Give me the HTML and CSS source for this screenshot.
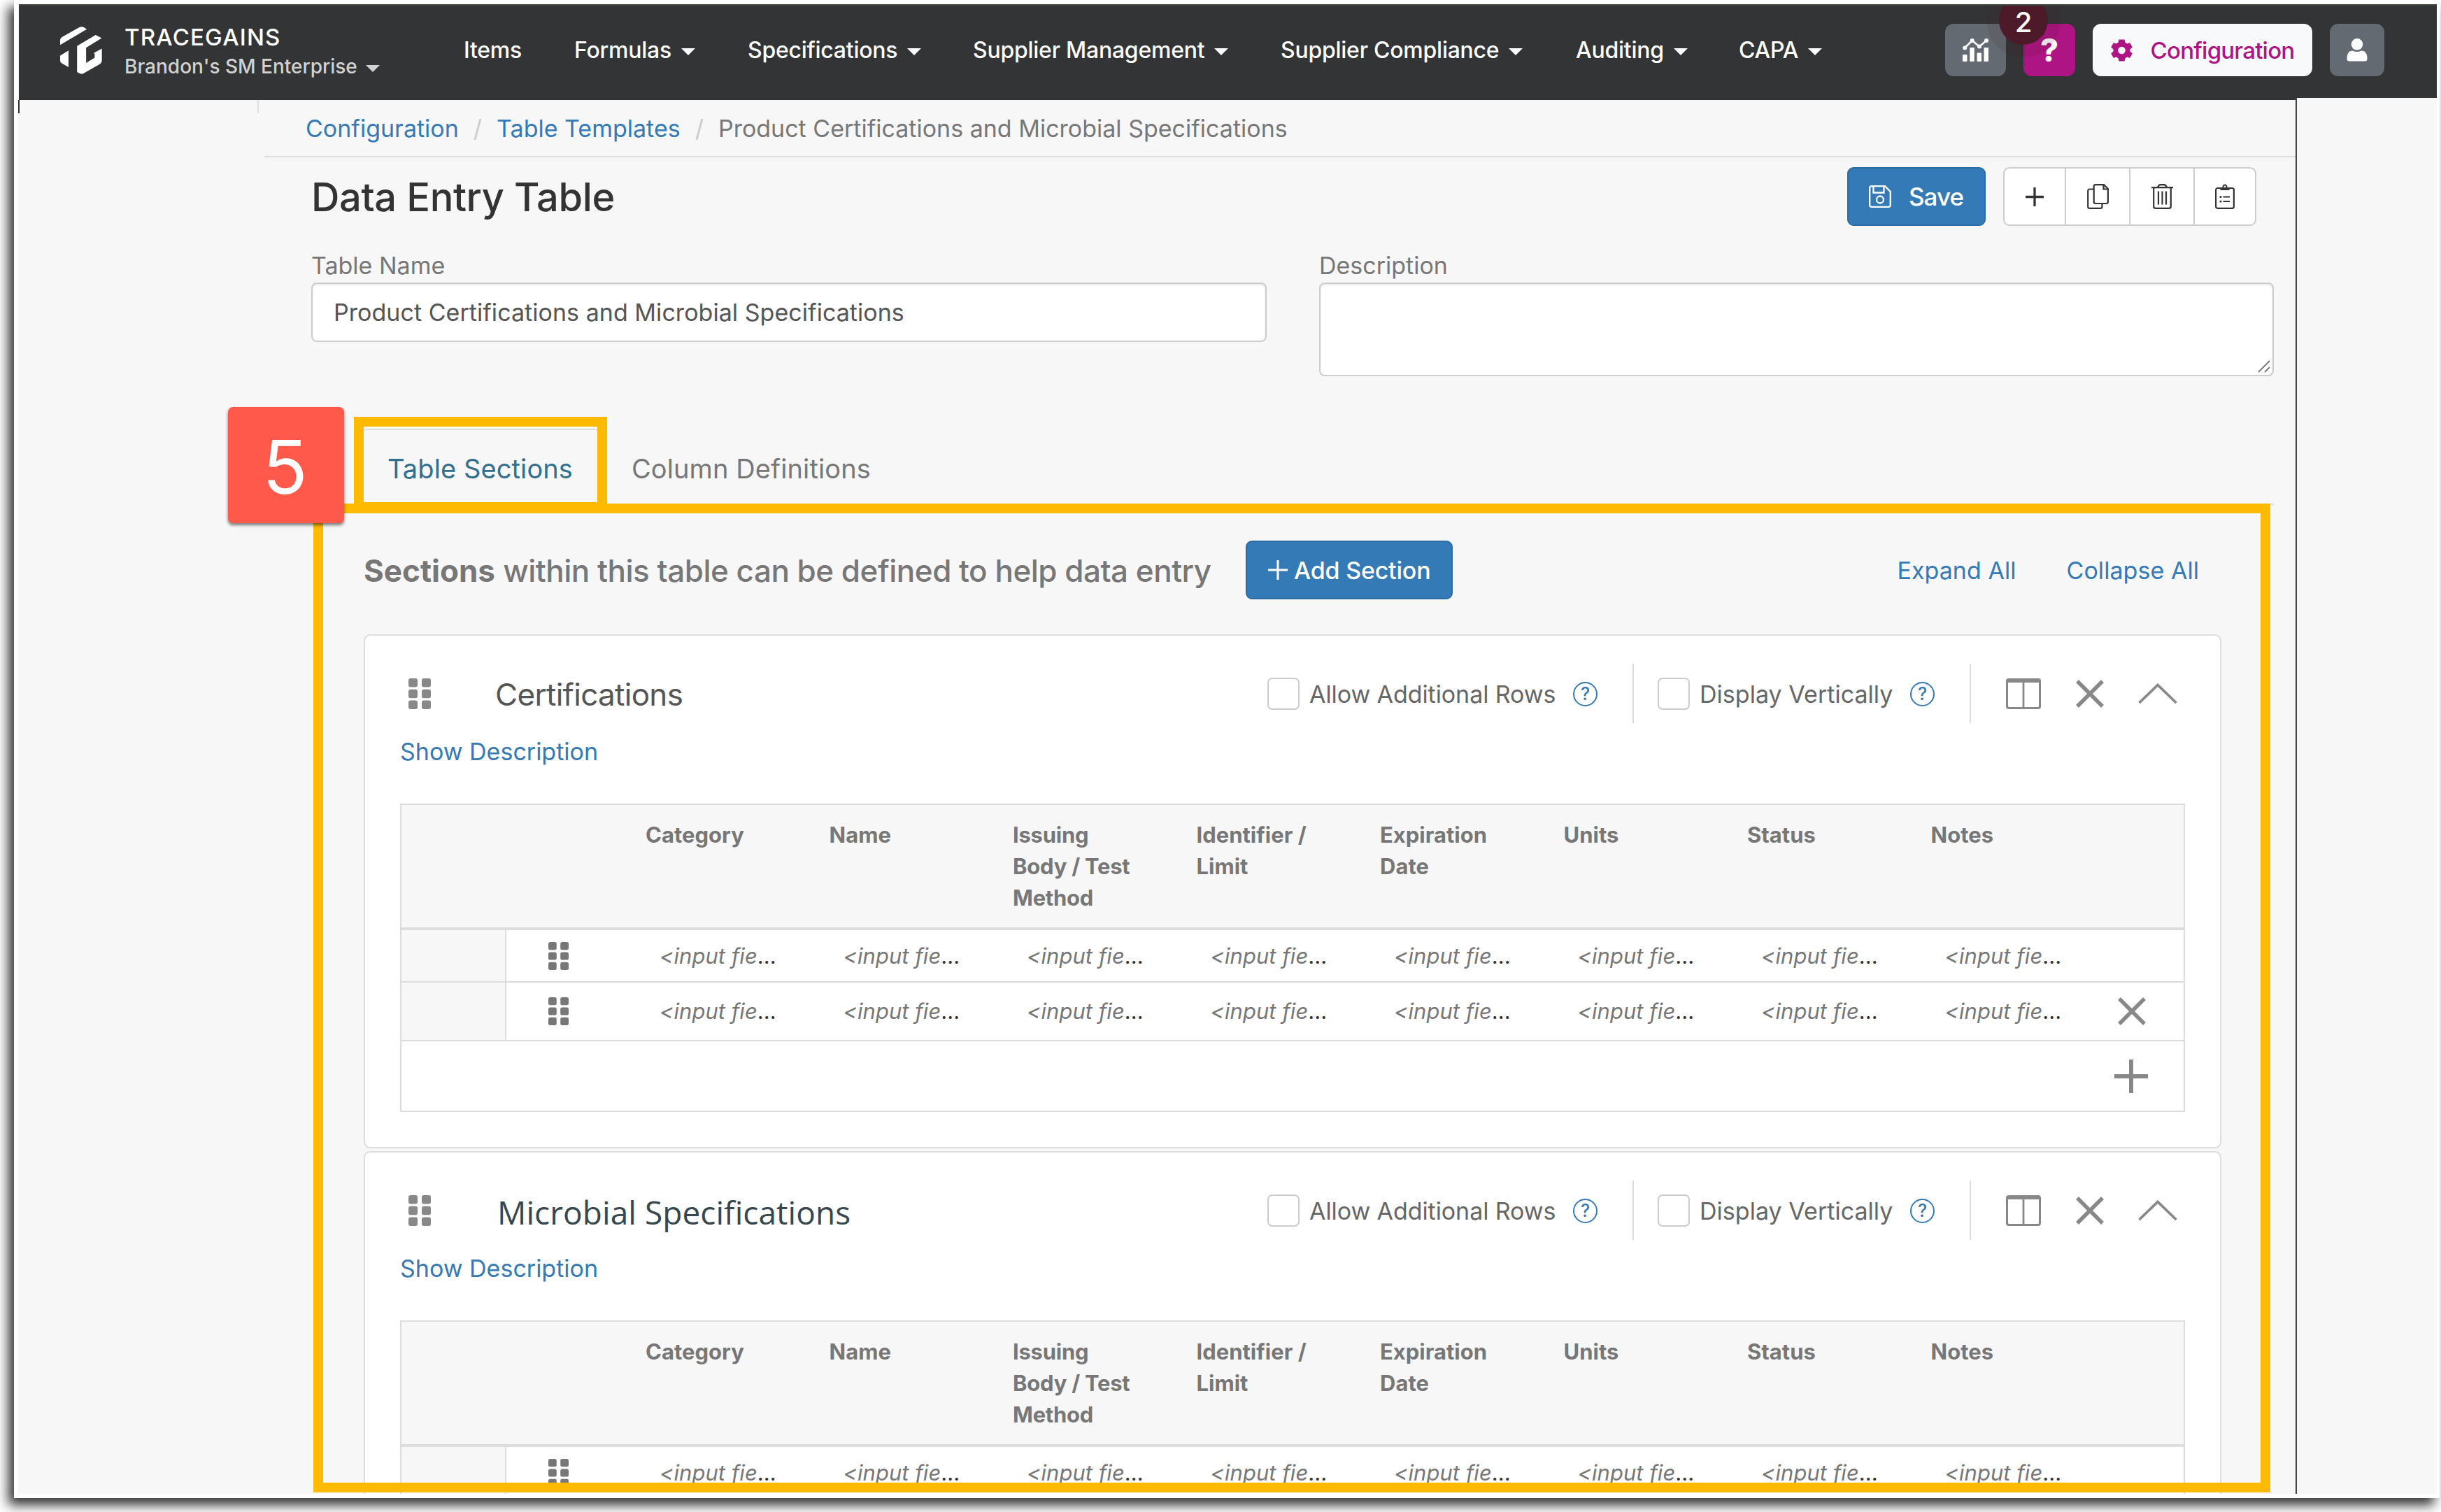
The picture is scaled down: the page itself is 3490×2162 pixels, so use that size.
FILE: index.html
```html
<!DOCTYPE html>
<html lang="en">
<head>
<meta charset="utf-8">
<title>Data Entry Table</title>
<link rel="stylesheet" href="styles.css">
</head>
<body>
<svg class="defs" width="0" height="0" aria-hidden="true">
  <symbol id="i-grip" viewBox="0 0 32 44"><g fill="currentColor"><rect width="13" height="12.4" rx="3"/><rect x="19" width="13" height="12.4" rx="3"/><rect y="15.8" width="13" height="12.4" rx="3"/><rect x="19" y="15.8" width="13" height="12.4" rx="3"/><rect y="31.6" width="13" height="12.4" rx="3"/><rect x="19" y="31.6" width="13" height="12.4" rx="3"/></g></symbol>
  <symbol id="i-columns" viewBox="0 0 50 44"><path fill="currentColor" fill-rule="evenodd" d="M4 0H46Q50 0 50 4V40Q50 44 46 44H4Q0 44 0 40V4Q0 0 4 0ZM3 6V39.5Q3 41 4.500 41H23.600V6ZM26.400 6V41H45.500Q47 41 47 39.500V6Z"/></symbol>
  <symbol id="i-close" viewBox="0 0 40 40"><path d="M2 2L38 38M38 2L2 38" fill="none" stroke="currentColor" stroke-width="5.500"/></symbol>
  <symbol id="i-up" viewBox="0 0 56 30"><path d="M1.500 28L28 2.500L54.500 28" fill="none" stroke="currentColor" stroke-width="3.800"/></symbol>
  <symbol id="i-plus" viewBox="0 0 48 48"><path d="M24 0V48M0 24H48" fill="none" stroke="currentColor" stroke-width="6"/></symbol>
</svg>
<div class="window">
<div class="app">
  <header class="topbar">
    <svg class="logo" viewBox="48 50 181 205"><g fill="#fff"><path d="M48 129V108Q48 100 56 95L131 53Q141 48 150 53L163 61Z"/><path d="M48 175L84 153V225L55 208Q48 204 48 196Z"/><path d="M121 134L201 86L227 100L160 141V207L197 184V168L193 164L228 145V196Q228 206 220 211L150 251Q141 257 132 252L121 246Z"/></g></svg>
    <div class="brand">
      <div class="brand-name">TRACEGAINS</div>
      <div class="brand-org">Brandon's SM Enterprise<i class="caret"></i></div>
    </div>
    <nav class="nav">
      <a>Items</a><a>Formulas<i class="caret"></i></a><a>Specifications<i class="caret"></i></a><a>Supplier Management<i class="caret"></i></a><a>Supplier Compliance<i class="caret"></i></a><a>Auditing<i class="caret"></i></a><a>CAPA<i class="caret"></i></a>
    </nav>
    <div class="tools">
      <button class="tool chart"><svg width="37" height="33" viewBox="0 0 37 33"><g fill="#fff"><rect y="23" width="6.500" height="10" rx="1"/><rect x="10.300" y="13" width="6.500" height="20" rx="1"/><rect x="20.600" y="20.500" width="6.500" height="12.500" rx="1"/><rect x="30.500" y="13" width="6.500" height="20" rx="1"/><circle cx="3.200" cy="13.500" r="3"/><circle cx="13.700" cy="3" r="3"/><circle cx="24" cy="11.500" r="3"/><circle cx="34" cy="3" r="3"/></g><path d="M3 13.500L13.700 3L24 11.500L34 3" fill="none" stroke="#fff" stroke-width="2.500"/></svg></button>
      <button class="tool help">?<span class="badge">2</span></button>
      <button class="tool config"><svg width="31" height="32" viewBox="0 0 31 32"><path fill="#ae1483" fill-rule="evenodd" d="M11.500 .5H19.500L20.500 4.800L23.500 6.500L27 5L30.800 11.500L27.500 14.500V17.500L30.800 20.500L27 27L23.500 25.500L20.500 27.200L19.500 31.500H11.500L10.500 27.200L7.500 25.500L4 27L.2 20.500L3.500 17.500V14.500L.2 11.500L4 5L7.500 6.500L10.500 4.800ZM15.500 10.700A5.300 5.300 0 1 0 15.500 21.300A5.300 5.300 0 1 0 15.500 10.700Z"/></svg>Configuration</button>
      <button class="tool user"><svg width="30" height="33" viewBox="0 0 30 33"><g fill="#fff"><circle cx="15" cy="8.300" r="8.300"/><path d="M.5 29Q.5 17.500 9 17.500Q15 20.500 21 17.500Q29.500 17.500 29.500 29Q29.500 32.500 26 32.500H4Q.5 32.500 .5 29Z"/></g></svg></button>
    </div>
  </header>

  <div class="body">
    <aside class="gutter-left"><div class="gutter-edge"></div></aside>
    <main class="content">
      <div class="crumbs"><a>Configuration</a><span class="sep">/</span><a>Table Templates</a><span class="sep">/</span><span>Product Certifications and Microbial Specifications</span></div>

      <div class="page">
        <div class="title-row">
          <h1>Data Entry Table</h1>
          <button class="btn save"><svg width="32" height="32" viewBox="0 0 32 32"><g fill="none" stroke="#fff" stroke-width="2.300"><path d="M4 1.200H23L30.800 9V28Q30.800 30.800 28 30.800H4Q1.200 30.800 1.200 28V4Q1.200 1.200 4 1.200Z"/><path d="M6.500 1.500V10.500H21.500V1.500"/><circle cx="16" cy="20.500" r="5"/></g></svg>Save</button>
          <div class="group">
            <button><svg width="26" height="27" viewBox="0 0 26 27"><path d="M13 0V27M0 13.500H26" stroke="#333" stroke-width="3.300"/></svg></button>
            <button><svg width="31" height="36" viewBox="0 0 31 36"><g fill="none" stroke="#333" stroke-width="2.200"><path d="M9 7.500H3.500Q1.200 7.500 1.200 10V32.500Q1.200 34.800 3.500 34.800H19Q21.500 34.800 21.500 32.500V28.500"/><path d="M12 1.200H24L29.900 7V25.500Q29.900 28 27.500 28H12Q9.700 28 9.700 25.500V3.500Q9.700 1.200 12 1.200Z"/><path d="M23.500 1.500V7.500H29.500"/></g></svg></button>
            <button><svg width="31" height="36" viewBox="0 0 31 36"><g fill="none" stroke="#333" stroke-width="2.200"><path d="M0 5.200H31M9 5Q10.500 1.200 13 1.200H18Q20.500 1.200 22 5"/><path d="M3.200 5.500V32Q3.200 34.800 6 34.800H25Q27.800 34.800 27.800 32V5.500"/><path d="M10 10.500V29.500M15.500 10.500V29.500M21 10.500V29.500"/></g></svg></button>
            <button><svg width="28" height="36" viewBox="0 0 28 36"><rect x="1.100" y="6" width="25.800" height="28.800" rx="2.500" fill="none" stroke="#333" stroke-width="2.200"/><path fill="#333" fill-rule="evenodd" d="M7 5H10.500Q10.500 .5 14 .5T17.500 5H21V7Q21 9 19 9H9Q7 9 7 7ZM14 2.500A1.500 1.500 0 1 0 14 5.500A1.500 1.500 0 1 0 14 2.500Z"/><path d="M11.500 18.500H21M11.500 25H21" stroke="#333" stroke-width="2.200"/><circle cx="8" cy="18.500" r="1.600" fill="#333"/><circle cx="8" cy="25" r="1.600" fill="#333"/></svg></button>
          </div>
        </div>

        <div class="form">
          <div class="field"><label>Table Name</label><div class="input">Product Certifications and Microbial Specifications</div></div>
          <div class="field"><label>Description</label><div class="input area"><svg width="18" height="18" viewBox="0 0 18 18"><path d="M1 17L17 1M10 17L17 10" stroke="#777" stroke-width="1.800"/></svg></div></div>
        </div>

        <div class="tabs"><a class="tab active">Table Sections</a><a class="tab">Column Definitions</a></div>

        <div class="panel">
          <div class="panel-head">
            <p><b>Sections</b> <span>within this table can be defined to help data entry</span></p>
            <button class="btn add"><svg width="28" height="28" viewBox="0 0 28 28"><path d="M14 0V28M0 14H28" stroke="#fff" stroke-width="3"/></svg>Add Section</button>
            <div class="links"><a>Expand All</a><a>Collapse All</a></div>
          </div>

          <section class="card">
            <div class="card-head">
              <svg class="grip"><use href="#i-grip"/></svg>
              <h2>Certifications</h2>
              <div class="option first"><i class="box"></i>Allow Additional Rows<span class="hint">?</span></div>
              <div class="option second"><i class="box"></i>Display Vertically<span class="hint">?</span></div>
              <div class="actions"><svg width="50" height="44"><use href="#i-columns"/></svg><svg width="40" height="40"><use href="#i-close"/></svg><svg width="56" height="30"><use href="#i-up"/></svg></div>
            </div>
            <a class="show">Show Description</a>
            <div class="table">
              <div class="row head"><i></i><i></i><b>Category</b><b>Name</b><b class="tight">Issuing<br>Body / Test<br>Method</b><b>Identifier /<br>Limit</b><b>Expiration<br>Date</b><b>Units</b><b>Status</b><b>Notes</b><i></i></div>
              <div class="row"><i class="stub"></i><i><svg class="grip small"><use href="#i-grip"/></svg></i><span><em>&lt;input fie</em>...</span><span><em>&lt;input fie</em>...</span><span><em>&lt;input fie</em>...</span><span><em>&lt;input fie</em>...</span><span><em>&lt;input fie</em>...</span><span><em>&lt;input fie</em>...</span><span><em>&lt;input fie</em>...</span><span><em>&lt;input fie</em>...</span><i></i></div>
              <div class="row tall"><i class="stub"></i><i><svg class="grip small"><use href="#i-grip"/></svg></i><span><em>&lt;input fie</em>...</span><span><em>&lt;input fie</em>...</span><span><em>&lt;input fie</em>...</span><span><em>&lt;input fie</em>...</span><span><em>&lt;input fie</em>...</span><span><em>&lt;input fie</em>...</span><span><em>&lt;input fie</em>...</span><span><em>&lt;input fie</em>...</span><i><svg width="40" height="40"><use href="#i-close"/></svg></i></div>
              <div class="row foot"><i><svg width="48" height="48"><use href="#i-plus"/></svg></i></div>
            </div>
          </section>

          <section class="card">
            <div class="card-head">
              <svg class="grip"><use href="#i-grip"/></svg>
              <h2 class="dark">Microbial Specifications</h2>
              <div class="option first"><i class="box"></i>Allow Additional Rows<span class="hint">?</span></div>
              <div class="option second"><i class="box"></i>Display Vertically<span class="hint">?</span></div>
              <div class="actions"><svg width="50" height="44"><use href="#i-columns"/></svg><svg width="40" height="40"><use href="#i-close"/></svg><svg width="56" height="30"><use href="#i-up"/></svg></div>
            </div>
            <a class="show">Show Description</a>
            <div class="table">
              <div class="row head"><i></i><i></i><b>Category</b><b>Name</b><b class="tight">Issuing<br>Body / Test<br>Method</b><b>Identifier /<br>Limit</b><b>Expiration<br>Date</b><b>Units</b><b>Status</b><b>Notes</b><i></i></div>
              <div class="row"><i class="stub"></i><i><svg class="grip small"><use href="#i-grip"/></svg></i><span><em>&lt;input fie</em>...</span><span><em>&lt;input fie</em>...</span><span><em>&lt;input fie</em>...</span><span><em>&lt;input fie</em>...</span><span><em>&lt;input fie</em>...</span><span><em>&lt;input fie</em>...</span><span><em>&lt;input fie</em>...</span><span><em>&lt;input fie</em>...</span><i></i></div>
            </div>
          </section>
        </div>
      </div>
    </main>
    <aside class="gutter-right"></aside>
  </div>

  <div class="mark mark-tab"></div>
  <div class="mark mark-panel"></div>
  <div class="step">5</div>
</div>
</div>
</body>
</html>
```
FILE: styles.css
```css
* { box-sizing: border-box; }
html, body { margin: 0; height: 2162px; overflow: hidden; background: #fff; }
body { padding: 0 2px 20px 20px; font-family: Inter, "Liberation Sans", sans-serif; font-size: 34px; color: #777; }
svg { display: block; flex: none; overflow: visible; }
button { font: inherit; margin: 0; padding: 0; border: 0; display: flex; align-items: center; }
h1, h2, p { margin: 0; }
i { font-style: normal; }
.defs { position: absolute; }

.window { height: 2142px; padding: 6px 4px 6px 6px; background: #fff; box-shadow: -8px 10px 16px #333; }
.app { position: relative; height: 2130px; overflow: hidden; background: #f7f7f7; display: flex; flex-direction: column; }

/* top bar */
.topbar { flex: none; height: 137px; margin-left: 1px; padding: 0 75px 8px 59px; background: #333436; border-top: 2px solid #414640; display: flex; align-items: center; overflow: hidden; }
.logo { width: 60px; height: 68px; }
.brand { margin: 5px 0 0 32px; width: 485px; font-weight: 500; line-height: 42px; white-space: nowrap; }
.brand-name { font-size: 33px; letter-spacing: 1.18px; color: #fff; }
.brand-org { font-size: 28px; color: #d2d2d2; display: flex; align-items: center; }
.caret { margin: 6px 0 0 14px; border: 10px solid transparent; border-top-color: currentColor; border-bottom: 0; }
.brand-org .caret { margin-left: 12px; }
.nav { display: grid; grid-template-columns: 158px 248px 322px 440px 422px 233px 140px; font-size: 32px; font-weight: 500; letter-spacing: -.25px; color: #fff; white-space: nowrap; }
.nav a { display: flex; align-items: center; }
.nav .caret { margin-top: 5px; }
.tools { margin-left: auto; display: flex; gap: 25px; }
.tool { position: relative; height: 75px; border-radius: 12px; justify-content: center; color: #fff; }
.chart { width: 87px; background: #646a72; }
.help { width: 74px; background: #ae1483; font-size: 45px; font-weight: 800; }
.config { width: 314px; background: #f8f9fb; color: #ae1483; gap: 26px; font-size: 33px; font-weight: 500; letter-spacing: -.78px; }
.user { width: 78px; background: #646a72; }
.badge { position: absolute; left: -35px; top: -40px; width: 70px; height: 70px; border-radius: 50%; background: #4d1a2a; box-shadow: 0 0 0 18px rgba(77, 26, 42, .12); font-size: 40px; font-weight: 500; line-height: 75px; text-align: center; }

/* page frame */
.body { flex: 1; display: flex; min-height: 0; }
.gutter-left { width: 344px; }
.gutter-edge { height: 19px; border-left: 2px solid #333; border-right: 2px solid #ddd; }
.content { width: 2912px; }
.gutter-right { position: relative; width: 202px; margin-top: -3px; background: #f7f7f7; border-left: 2px solid #444; }

.crumbs { height: 82px; margin-left: 8px; padding: 0 0 0 59px; border-bottom: 2px solid #ddd; display: flex; align-items: center; gap: 21px; }
.crumbs a, .links a, .show { color: #337ab7; }
.sep { color: #ccc; }
.page { padding: 14px 31px 0 75px; }

.title-row { height: 84px; display: flex; align-items: center; padding-right: 25px; }
h1 { font-size: 56px; font-weight: 500; letter-spacing: -.4px; color: #333; margin: 1px auto 0 0; }
.btn { height: 84px; border: 2px solid #2e6da4; border-radius: 9px; background: #337ab7; color: #fff; font-weight: 500; }
.save { width: 198px; padding-left: 29px; gap: 25px; font-size: 35px; letter-spacing: -1px; }
.group { margin-left: 25px; width: 362px; height: 84px; display: grid; grid-template-columns: 86px 92px 92px 88px; background: #fff; border: 2px solid #ccc; border-radius: 9px; }
.group button { justify-content: center; background: none; }
.group button + button { border-left: 2px solid #ccc; }

.form { margin-top: 33px; height: 181px; display: grid; grid-template-columns: 1366px 1365px; gap: 75px; }
.field label { display: block; height: 48px; line-height: 48px; }
.input { height: 85px; border: 2px solid #ccc; border-radius: 8px; background: #fff; box-shadow: inset 0 2px 3px rgba(0, 0, 0, .08); padding-left: 30px; line-height: 82px; letter-spacing: .04px; color: #555; }
.area { height: 134px; display: flex; align-items: flex-end; justify-content: flex-end; padding: 0 3px 3px; }

.tabs { margin-top: 76px; height: 109px; border-bottom: 2px solid #ddd; padding-left: 69px; display: flex; font-size: 38px; }
.tab { padding: 0 38px; line-height: 114px; letter-spacing: .1px; }
.tab + .tab { padding-left: 44px; }
.active { color: #31708f; border: 2px solid #ddd; border-bottom: 0; border-radius: 8px 8px 0 0; line-height: 110px; }

/* sections panel */
.panel { padding: 51px 75px 0; }
.panel-head { height: 84px; margin-bottom: 50px; display: flex; align-items: center; }
.panel-head p { width: 1261px; font-size: 44px; font-weight: 500; letter-spacing: -.5px; white-space: nowrap; padding-top: 1px; }
.panel-head b { font-weight: 700; letter-spacing: 0; }
.add { width: 296px; padding-left: 30px; gap: 9px; letter-spacing: -.2px; }
.links { margin: 0 32px 0 auto; display: flex; gap: 72px; letter-spacing: .05px; }

.card { height: 735px; margin-bottom: 4px; padding: 40px 50px 0; background: #fff; border: 2px solid #ddd; border-radius: 9px; }
.card-head { height: 85px; padding: 0 11px 0 12px; display: flex; align-items: center; }
.grip { width: 32px; height: 44px; color: #888; }
.small { width: 29px; height: 40px; color: #777; }
h2 { margin: 2px auto 0 92px; font-size: 44px; font-weight: 400; letter-spacing: -.7px; color: #555; }
.dark { margin-left: 95px; padding-top: 2px; font-family: "Open Sans", "Noto Sans", sans-serif; font-size: 46px; letter-spacing: .06px; color: #37474f; }
.option { height: 85px; display: flex; align-items: center; color: #666; letter-spacing: -.08px; white-space: nowrap; padding-top: 1px; }
.first { width: 522px; }
.second { width: 482px; padding-left: 34px; letter-spacing: .03px; }
.second, .actions { border-left: 2px solid #ddd; }
.box { width: 46px; height: 46px; margin: -1px 14px 0 0; border: 2px solid #ccc; border-radius: 7px; background: #fff; }
.hint { width: 35px; height: 35px; margin: 0 50px 0 auto; border: 2.5px solid #337ab7; border-radius: 50%; color: #337ab7; font-size: 25px; font-weight: 500; line-height: 30px; text-align: center; letter-spacing: 0; }
.actions { height: 85px; padding-left: 50px; display: flex; align-items: center; gap: 49.5px; color: #888; }
.show { display: block; height: 50px; margin-top: 16px; line-height: 50px; }

.table { margin-top: 49px; border: 2px solid #ddd; }
.row { height: 75px; display: grid; grid-template-columns: 150px 149px repeat(8, 262.5px) 149px; border-bottom: 2px solid #ddd; font-size: 31px; line-height: 73px; white-space: nowrap; }
.row > i { display: flex; align-items: center; justify-content: center; color: #888; }
.head { height: 179px; border-bottom-width: 4px; background: #f7f7f7; }
.head b { padding: 20px 0 0 50px; line-height: 45px; }
.head .tight { letter-spacing: -.25px; }
.row span { padding-left: 70px; color: #333; letter-spacing: .02px; }
.row em { color: #777; }
.row .stub { background: #f7f7f7; border-right: 2px solid #ddd; }
.tall { height: 84px; line-height: 82px; }
.foot { height: 99px; grid-template-columns: 150px; justify-content: end; border-bottom: 0; }

/* callouts drawn over the page */
.mark { position: absolute; border: 14px solid #fdba00; }
.mark-tab { left: 480px; top: 590px; width: 362px; height: 136px; }
.mark-panel { left: 422px; top: 714px; width: 2798px; height: 1414px; }
.step { position: absolute; left: 300px; top: 576px; width: 166px; height: 166px; border-radius: 7px; background: #ff594c; box-shadow: 0 3px 4px rgba(0, 0, 0, .5); color: #fff; font-size: 106px; line-height: 171px; text-align: center; padding-right: 3px; }
```
